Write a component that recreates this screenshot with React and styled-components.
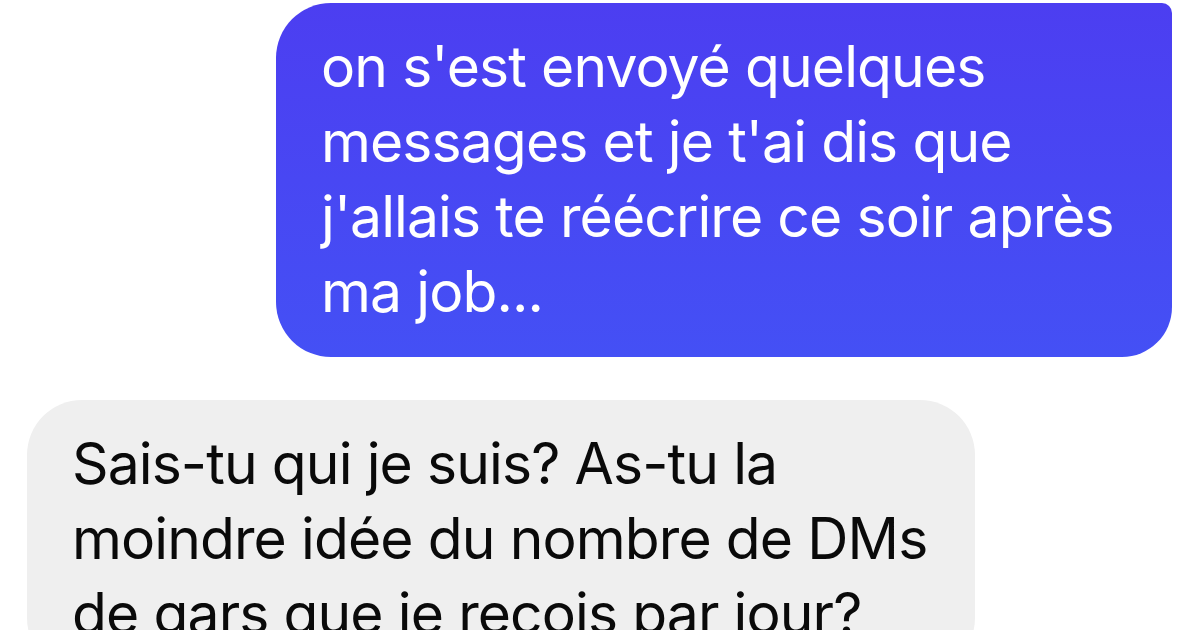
import React from "react";
import styled, { createGlobalStyle } from "styled-components";

const GlobalStyle = createGlobalStyle`
  html, body {
    margin: 0;
    padding: 0;
    background: #ffffff;
    overflow: hidden;
  }
  body {
    font-family: Inter, "Noto Sans", "Liberation Sans", sans-serif;
  }
`;

const Thread = styled.div`
  width: 1200px;
  height: 630px;
  display: flex;
  flex-direction: column;
  gap: 43px;
  padding-top: 3px;
  box-sizing: border-box;
  overflow: hidden;
`;

const Row = styled.div`
  display: flex;
  justify-content: ${(p) => (p.$mine ? "flex-end" : "flex-start")};
  padding: ${(p) => (p.$mine ? "0 28px 0 0" : "0 0 0 27px")};
`;

const Bubble = styled.div`
  box-sizing: border-box;
  width: ${(p) => p.$width}px;
  padding: ${(p) => (p.$mine ? "26px 20px 28px 45px" : "26px 20px 22px 45px")};
  border-radius: ${(p) => (p.$mine ? "55px 10px 50px 55px" : "55px")};
  background: ${(p) =>
    p.$mine ? "linear-gradient(180deg, #4c3ef1 0%, #4450f5 100%)" : "#efefef"};
  color: ${(p) => (p.$mine ? "#ffffff" : "#0a0a0a")};
  font-size: 57px;
  line-height: 75px;
  letter-spacing: -0.9px;
`;

const Line = styled.span`
  display: block;
  white-space: nowrap;
`;

const messages = [
  {
    mine: true,
    width: 896,
    lines: [
      "on s'est envoyé quelques",
      "messages et je t'ai dis que",
      "j'allais te réécrire ce soir après",
      "ma job...",
    ],
  },
  {
    mine: false,
    width: 948,
    lines: [
      "Sais-tu qui je suis? As-tu la",
      "moindre idée du nombre de DMs",
      "de gars que je reçois par jour?",
    ],
  },
];

const App = () => {
  return (
    <>
      <GlobalStyle />
      <Thread>
        {messages.map((msg, i) => (
          <Row key={i} $mine={msg.mine}>
            <Bubble $mine={msg.mine} $width={msg.width}>
              {msg.lines.map((line) => (
                <Line key={line}>{line}</Line>
              ))}
            </Bubble>
          </Row>
        ))}
      </Thread>
    </>
  );
};

export default App;
